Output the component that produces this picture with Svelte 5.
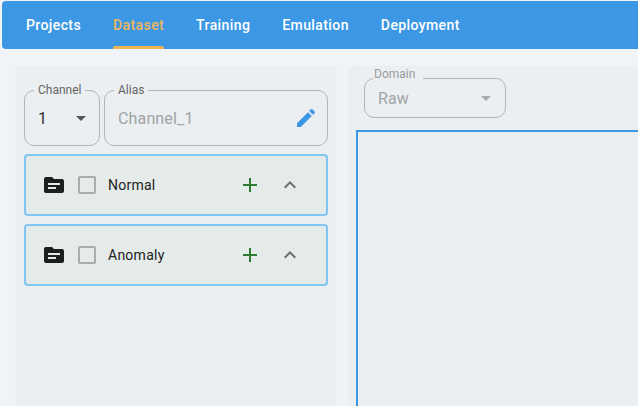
<script>
	const tabs = ['Projects', 'Dataset', 'Training', 'Emulation', 'Deployment'];
	let active = $state('Dataset');
	const groups = ['Normal', 'Anomaly'];
</script>

<div class="page">
	<nav class="navbar">
		{#each tabs as tab}
			<button class="tab" class:active={tab === active} onclick={() => (active = tab)}>{tab}</button>
		{/each}
	</nav>

	<main class="content">
		<section class="panel left">
			<div class="fields">
				<fieldset class="field channel">
					<legend>Channel</legend>
					<span class="value">1</span>
					<svg class="caret" viewBox="0 0 24 24"><path d="M7 10l5 5 5-5z" /></svg>
				</fieldset>
				<fieldset class="field alias">
					<legend>Alias</legend>
					<span class="value muted">Channel_1</span>
					<svg class="pencil" viewBox="0 0 24 24">
						<path d="M3 17.25V21h3.75L17.81 9.94l-3.75-3.75L3 17.25zM20.71 7.04a1 1 0 0 0 0-1.41l-2.34-2.34a1 1 0 0 0-1.41 0l-1.83 1.83 3.75 3.75 1.83-1.83z" />
					</svg>
				</fieldset>
			</div>

			{#each groups as group}
				<div class="group">
					<svg class="folder" viewBox="0 0 24 24">
						<path d="M20 6h-8l-2-2H4c-1.1 0-2 .9-2 2v12c0 1.1.9 2 2 2h16c1.1 0 2-.9 2-2V8c0-1.1-.9-2-2-2zm-6 10H6v-2h8v2zm4-4H6v-2h12v2z" />
					</svg>
					<span class="checkbox"></span>
					<span class="name">{group}</span>
					<svg class="plus" viewBox="0 0 24 24"><path d="M19 13h-6v6h-2v-6H5v-2h6V5h2v6h6v2z" /></svg>
					<svg class="chevron" viewBox="0 0 24 24"><path d="M12 8l-6 6 1.41 1.41L12 10.83l4.59 4.58L18 14z" /></svg>
				</div>
			{/each}
		</section>

		<section class="panel right">
			<fieldset class="field domain">
				<legend>Domain</legend>
				<span class="value muted">Raw</span>
				<svg class="caret faded" viewBox="0 0 24 24"><path d="M7 10l5 5 5-5z" /></svg>
			</fieldset>
			<div class="chart"></div>
		</section>
	</main>
</div>

<style>
	:global(body) {
		background: #f0f4f9;
		overflow: hidden;
	}

	.page {
		height: 406px;
		overflow: hidden;
		font-family: Roboto, sans-serif;
		padding: 1px 0 0 2px;
		box-sizing: border-box;
	}

	.navbar {
		display: flex;
		gap: 32px;
		height: 48px;
		padding-left: 24px;
		background: #3c97e4;
		border-radius: 4px 0 0 4px;
	}

	.tab {
		height: 48px;
		padding: 0;
		border: 0;
		background: none;
		color: #fff;
		font: 500 14px Roboto, sans-serif;
		letter-spacing: 0.4px;
		position: relative;
		cursor: pointer;
	}

	.tab.active {
		color: #eeb75e;
	}

	.tab.active::after {
		content: '';
		position: absolute;
		left: 0;
		right: 0;
		bottom: 0;
		height: 3px;
		background: #f0b450;
		border-radius: 2px 2px 0 0;
	}

	.content {
		display: flex;
		gap: 12px;
		padding: 17px 0 0 14px;
	}

	.panel {
		background: #ebeff2;
		border-radius: 6px 6px 0 0;
		height: 340px;
		box-sizing: border-box;
		box-shadow: 0 0 1px rgba(0, 0, 0, 0.1);
	}

	.left {
		display: flex;
		flex-direction: column;
		gap: 8px;
		width: 320px;
		flex: none;
		padding: 17px 8px 0;
	}

	.right {
		flex: 1;
		padding: 1px 0 0 8px;
		min-width: 0;
	}

	.fields {
		display: flex;
		gap: 4px;
	}

	.field {
		display: flex;
		align-items: center;
		box-sizing: border-box;
		margin: 0;
		padding: 0 0 6px 13px;
		border: 1px solid #b3b6b8;
		border-radius: 10px;
		min-width: 0;
	}

	legend {
		padding: 0 4px;
		margin-left: -4px;
		font-size: 12px;
		line-height: 14px;
		color: #666;
	}

	.channel {
		width: 76px;
		height: 63px;
	}

	.alias {
		flex: 1;
		height: 63px;
	}

	.value {
		flex: 1;
		font-size: 16px;
		color: #333;
		letter-spacing: 0.15px;
	}

	.muted {
		color: #a0a3a5;
	}

	.caret {
		width: 24px;
		height: 24px;
		margin-right: 6px;
		fill: #555;
	}

	.caret.faded {
		fill: #a8abad;
		margin-right: 7px;
	}

	.pencil {
		width: 24px;
		height: 24px;
		margin-right: 9px;
		fill: #3c97e4;
	}

	.group {
		display: flex;
		align-items: center;
		box-sizing: border-box;
		height: 62px;
		border: 2px solid #7fc6f6;
		border-radius: 4px;
		background: #e4ebe9;
		padding-left: 16px;
	}

	.folder {
		width: 24px;
		height: 24px;
		fill: #1c1e1f;
		flex: none;
	}

	.checkbox {
		width: 14px;
		height: 14px;
		margin-left: 12px;
		border: 2px solid #a9acac;
		border-radius: 2px;
		flex: none;
	}

	.name {
		flex: 1;
		margin-left: 12px;
		font-size: 14px;
		font-weight: 400;
		color: #222;
		letter-spacing: 0.25px;
	}

	.plus {
		width: 24px;
		height: 24px;
		fill: #2e7d32;
		flex: none;
	}

	.chevron {
		width: 24px;
		height: 24px;
		margin: 0 24px 0 16px;
		fill: #6a6d6d;
		flex: none;
	}

	.domain {
		width: 142px;
		height: 51px;
		margin-left: 8px;
		padding-bottom: 10px;
	}

	.domain legend {
		color: #9a9d9f;
		margin-left: -5px;
		padding: 0 8px 8px 1px;
	}

	.chart {
		height: 300px;
		margin-top: 12px;
		border: 2px solid #3c97e4;
		border-right: 0;
		box-sizing: border-box;
	}
</style>
